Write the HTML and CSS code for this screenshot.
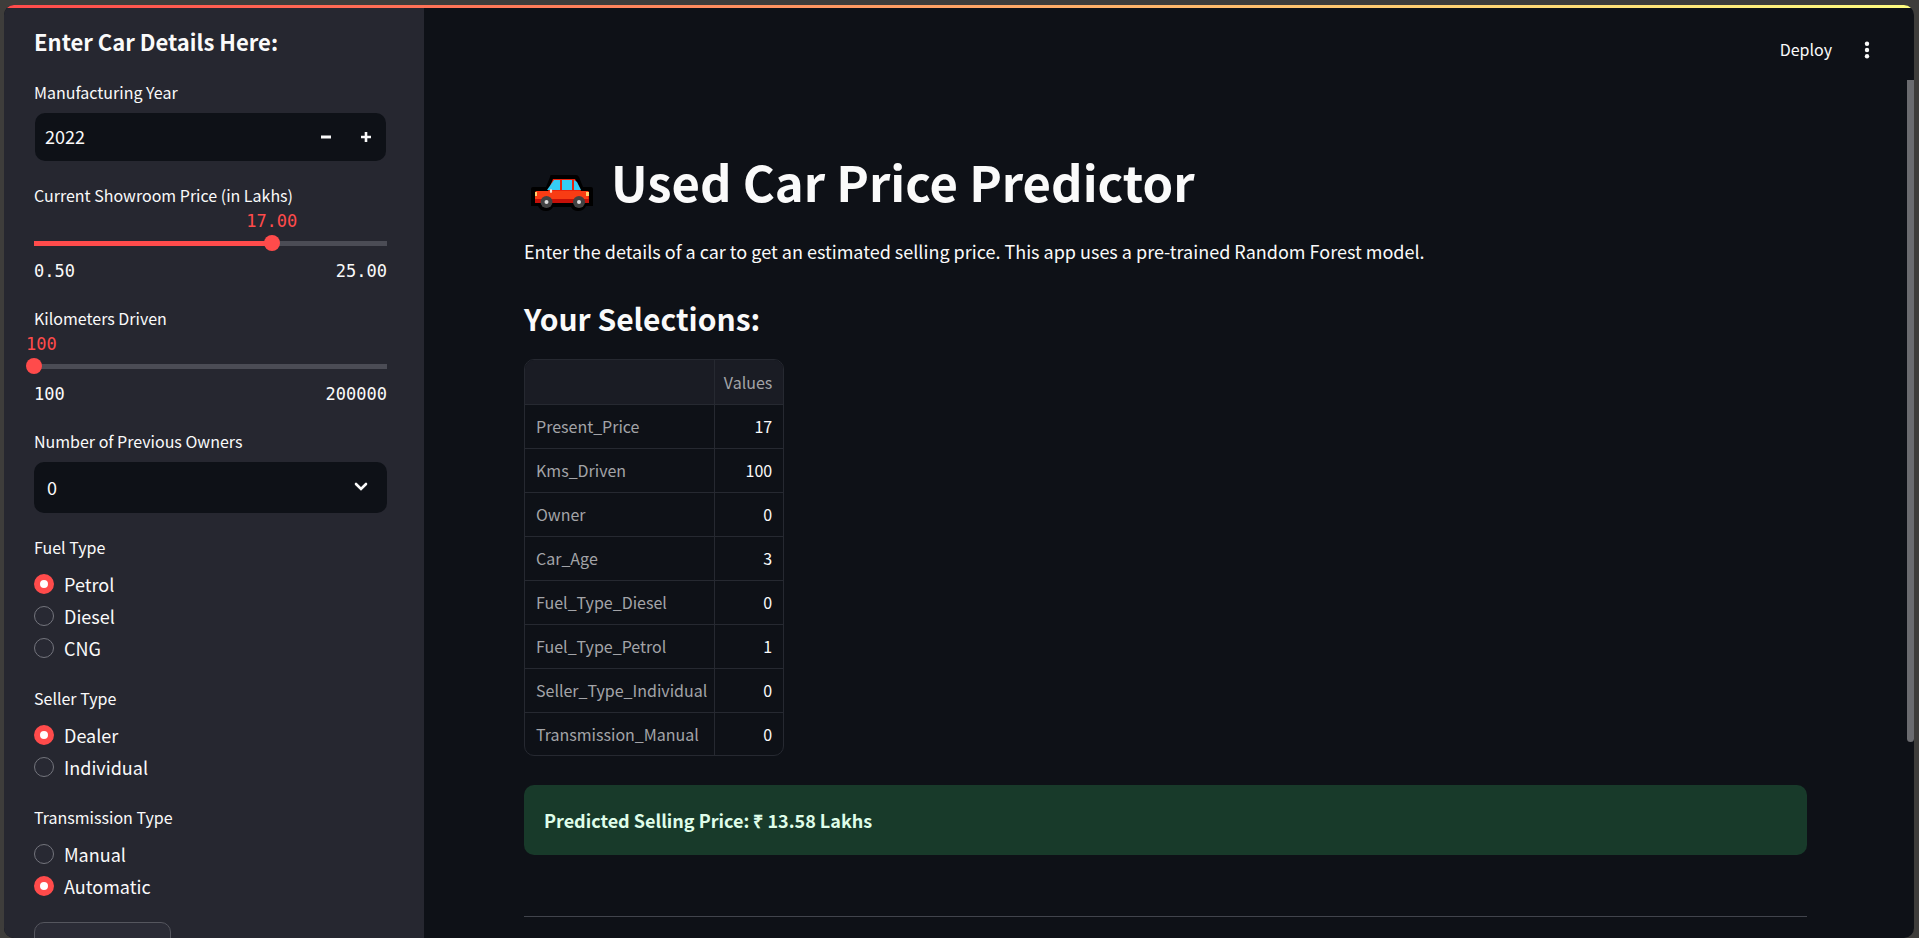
FILE: index.html
```html
<!DOCTYPE html>
<html lang="en">
<head>
<meta charset="utf-8">
<title>Used Car Price Predictor</title>
<link rel="stylesheet" href="styles.css">
</head>
<body>
<div class="app">
  <div class="decoration"></div>
  <aside class="sidebar">
    <h2 class="sidebar-title">Enter Car Details Here:</h2>
    <div class="field">
      <label class="label" for="year">Manufacturing Year</label>
      <div class="number">
        <input class="number-input" id="year" type="text" inputmode="numeric" value="2022">
        <button class="step" type="button" aria-label="Decrease"><svg viewBox="0 0 10 10" width="10" height="10"><path d="M0 5h10" stroke="currentColor" stroke-width="3"/></svg></button>
        <button class="step" type="button" aria-label="Increase"><svg viewBox="0 0 10 10" width="10" height="10"><path d="M0 5h10M5 0v10" stroke="currentColor" stroke-width="2.6"/></svg></button>
      </div>
    </div>
    <div class="field slider-field">
      <label class="label" for="price">Current Showroom Price (in Lakhs)</label>
      <div class="slider" style="--at: 67.35%">
        <output class="slider-value" for="price">17.00</output>
        <input class="range" id="price" type="range" min="0.5" max="25" step="0.01" value="17">
        <div class="ticks"><span>0.50</span><span>25.00</span></div>
      </div>
    </div>
    <div class="field slider-field">
      <label class="label" for="kms">Kilometers Driven</label>
      <div class="slider" style="--at: 0%">
        <output class="slider-value at-start" for="kms">100</output>
        <input class="range" id="kms" type="range" min="100" max="200000" value="100">
        <div class="ticks"><span>100</span><span>200000</span></div>
      </div>
    </div>
    <div class="field">
      <label class="label" for="owners">Number of Previous Owners</label>
      <div class="select-wrap">
        <select class="select" id="owners"><option>0</option><option>1</option><option>2</option><option>3</option></select>
        <svg class="chevron" viewBox="0 0 14 10" width="14" height="10"><path d="M2 2l5 5 5-5" fill="none" stroke="currentColor" stroke-width="2.6" stroke-linecap="round"/></svg>
      </div>
    </div>
    <fieldset class="field group">
      <legend class="label">Fuel Type</legend>
      <label class="option"><input class="radio" type="radio" name="fuel" checked>Petrol</label>
      <label class="option"><input class="radio" type="radio" name="fuel">Diesel</label>
      <label class="option"><input class="radio" type="radio" name="fuel">CNG</label>
    </fieldset>
    <fieldset class="field group">
      <legend class="label">Seller Type</legend>
      <label class="option"><input class="radio" type="radio" name="seller" checked>Dealer</label>
      <label class="option"><input class="radio" type="radio" name="seller">Individual</label>
    </fieldset>
    <fieldset class="field group">
      <legend class="label">Transmission Type</legend>
      <label class="option"><input class="radio" type="radio" name="gear">Manual</label>
      <label class="option"><input class="radio" type="radio" name="gear" checked>Automatic</label>
    </fieldset>
    <button class="submit" type="button" aria-label="Submit"></button>
  </aside>
  <main class="main">
    <header class="toolbar">
      <button class="deploy" type="button">Deploy</button>
      <button class="more" type="button" aria-label="Main menu"><svg viewBox="0 0 6 18" width="6" height="18" fill="currentColor"><circle cx="3" cy="2.7" r="2.2"/><circle cx="3" cy="9" r="2.2"/><circle cx="3" cy="15.3" r="2.2"/></svg></button>
    </header>
    <div class="content">
      <h1 class="title">
        <svg class="car" viewBox="0 0 62 36" width="62" height="36" aria-hidden="true">
          <path d="M20 0H45Q47 0 48 2L52 12H60Q62 12 62 14V31H55Q53 36 47 36Q42 36 40 32H22Q20 36 15 36Q9 36 7 31H0V14Q0 12 2 12H15L19 2Q19 0 20 0Z" fill="#000"/>
          <path d="M22 4H44L50 16H57Q58 16 58 18V28H4V18Q4 16 7 16H17Z" fill="#e8230c"/>
          <path d="M5 16H57V24H4V18Z" fill="#f83c14"/>
          <path d="M23 5H29V15H16Z" fill="#35cdf5"/>
          <path d="M31 5H41V15H31Z" fill="#35cdf5"/>
          <path d="M43 5L46 7L50 15H43Z" fill="#35cdf5"/>
          <path d="M4 24H58V28H4Z" fill="#c61008"/>
          <path d="M4 17H6V21H4ZM55 17H58V21H55Z" fill="#ffd16b"/>
          <ellipse cx="20" cy="16" rx="1.2" ry="2" fill="#ffd9c9"/>
          <circle cx="15.500" cy="27" r="6" fill="#424242"/><circle cx="48" cy="27" r="6" fill="#424242"/>
          <circle cx="15.500" cy="27" r="2" fill="#ddd"/><circle cx="48" cy="27" r="2" fill="#ddd"/>
        </svg>
        <span>Used Car Price Predictor</span>
      </h1>
      <p class="intro">Enter the details of a car to get an estimated selling price. This app uses a pre-trained Random Forest model.</p>
      <h2 class="subtitle">Your Selections:</h2>
      <div class="table-frame">
        <table class="table">
          <thead><tr><th></th><th scope="col">Values</th></tr></thead>
          <tbody>
            <tr><th scope="row">Present_Price</th><td>17</td></tr>
            <tr><th scope="row">Kms_Driven</th><td>100</td></tr>
            <tr><th scope="row">Owner</th><td>0</td></tr>
            <tr><th scope="row">Car_Age</th><td>3</td></tr>
            <tr><th scope="row">Fuel_Type_Diesel</th><td>0</td></tr>
            <tr><th scope="row">Fuel_Type_Petrol</th><td>1</td></tr>
            <tr><th scope="row">Seller_Type_Individual</th><td>0</td></tr>
            <tr><th scope="row">Transmission_Manual</th><td>0</td></tr>
          </tbody>
        </table>
      </div>
      <div class="alert" role="status">Predicted Selling Price: ₹ 13.58 Lakhs</div>
      <hr class="rule">
    </div>
    <div class="scrollbar"></div>
  </main>
</div>
</body>
</html>
```
FILE: styles.css
```css
* { box-sizing: border-box; }

body {
  margin: 0;
  height: 100vh;
  padding: 5px 5px 0 4px;
  overflow: hidden;
  background: #3e3d3b;
  color: #fafafa;
  font-family: "Noto Sans CJK JP", "Noto Sans CJK SC", "Open Sans", sans-serif;
  font-size: 18px;
  line-height: 32px;
}

button, input, select { font: inherit; color: inherit; }
button { border: 0; background: none; padding: 0; }
svg { display: block; }

.app {
  position: relative;
  display: flex;
  height: 100%;
  overflow: hidden;
  border-radius: 10px;
  background: #0e1117;
}

.decoration {
  position: absolute;
  inset: 0 0 auto;
  z-index: 2;
  height: 3px;
  background: linear-gradient(90deg, #ff4b4b, #fffd80);
}

.sidebar {
  flex: 0 0 420px;
  display: flex;
  flex-direction: column;
  gap: 20px;
  padding: 22px 37px 0 30px;
  overflow: hidden;
  background: #262730;
}

.sidebar > * { flex-shrink: 0; }

.sidebar-title {
  margin: 0;
  height: 31px;
  font-size: 22px;
  line-height: 28px;
  font-weight: 700;
}

.field { min-width: 0; }

.label {
  display: block;
  height: 30px;
  margin-bottom: 5px;
  padding: 0;
  font-size: 16px;
  line-height: 28px;
}

.number {
  display: flex;
  height: 48px;
  margin: 0 1px;
  border-radius: 10px;
  overflow: hidden;
  background: #0e1117;
}

.number-input {
  flex: 1;
  min-width: 0;
  padding: 0 10px 2px;
  border: 0;
  background: none;
}

.step {
  display: grid;
  place-items: center;
  width: 40px;
}

.slider-field { height: 103px; }
.slider-field .label { margin: 0; }

.slider {
  position: relative;
  font-family: "DejaVu Sans Mono", monospace;
  font-size: 17px;
  line-height: 20px;
}

.slider-value {
  display: block;
  width: max-content;
  margin-left: var(--at);
  transform: translateX(-50%);
  color: #ff4b4b;
}

.slider-value.at-start { margin-left: -8px; transform: none; }

.range {
  appearance: none;
  display: block;
  width: calc(100% + 16px);
  height: 16px;
  margin: 4px -8px 0;
  background:
    linear-gradient(90deg, #ff4b4b var(--at), #4b4c55 var(--at)) center / calc(100% - 16px) 5px no-repeat;
}

.range::-webkit-slider-thumb {
  appearance: none;
  width: 16px;
  height: 16px;
  border-radius: 50%;
  background: #ff4b4b;
}

.ticks {
  display: flex;
  justify-content: space-between;
  margin-top: 10px;
}

.select-wrap { position: relative; }

.select {
  appearance: none;
  display: block;
  width: 100%;
  height: 51px;
  padding: 0 13px 2px;
  border: 0;
  border-radius: 10px;
  background: #0e1117;
}

.chevron {
  position: absolute;
  top: 20px;
  right: 19px;
  pointer-events: none;
}

.group {
  margin: 0;
  padding: 0;
  border: 0;
}

.option {
  display: flex;
  align-items: center;
  gap: 10px;
  height: 32px;
}

.radio {
  appearance: none;
  width: 20px;
  height: 20px;
  margin: 0;
  border: 1px solid #74757d;
  border-radius: 50%;
  background: #282933;
}

.radio:checked {
  border: 6px solid #ff4b4b;
  background: #fff;
}

.submit {
  width: 137px;
  height: 50px;
  border: 1px solid #55565e;
  border-radius: 10px;
  background: #2b2c36;
}

.main {
  position: relative;
  flex: 1;
  min-width: 0;
  padding-right: 7px;
}

.toolbar {
  display: flex;
  justify-content: flex-end;
  align-items: flex-start;
  gap: 32px;
  height: 75px;
  padding: 29px 37px 0 0;
}

.deploy, .more { height: 32px; }
.deploy { font-size: 16px; line-height: 30px; padding-bottom: 2px; }
.more { display: flex; align-items: center; }

.content { padding: 65px 100px 0; }

.title {
  display: flex;
  align-items: center;
  gap: 18px;
  margin: 0;
  padding-left: 7px;
  font-size: 49px;
  line-height: 72px;
  font-weight: 700;
}

.car { margin-top: 24px; }

.intro { margin: 18px 0 0; }

.subtitle {
  margin: 27px 0 0;
  font-size: 30px;
  line-height: 48px;
  font-weight: 700;
}

.table-frame {
  width: max-content;
  margin-top: 17px;
  overflow: hidden;
  border: 1px solid #262931;
  border-radius: 10px;
}

.table {
  height: 395px;
  border-collapse: separate;
  border-spacing: 0;
  font-size: 16px;
  line-height: 24px;
}

.table th, .table td {
  padding: 0 11px;
  border-bottom: 1px solid #262931;
  text-align: right;
}

.table th {
  color: #a3a4a8;
  font-weight: 400;
}

.table tr > :first-child {
  width: 190px;
  padding-right: 7px;
  border-right: 1px solid #262931;
  text-align: left;
}

.table tr > :last-child { width: 68px; padding-left: 8px; }
.table thead th { height: 45px; background: #1a1c24; }
.table tbody tr:last-child > * { border-bottom: 0; }

.alert {
  margin-top: 29px;
  padding: 19px 20px;
  border-radius: 10px;
  background: #183a2a;
  color: #dffde9;
  font-weight: 700;
}

.rule {
  margin: 61px 0 0;
  border: 0;
  border-top: 1px solid #41444c;
}

.scrollbar {
  position: absolute;
  top: 75px;
  right: 0;
  width: 7px;
  height: 71%;
  border-radius: 0 0 4px 4px;
  background: #6b6c70;
}
```
